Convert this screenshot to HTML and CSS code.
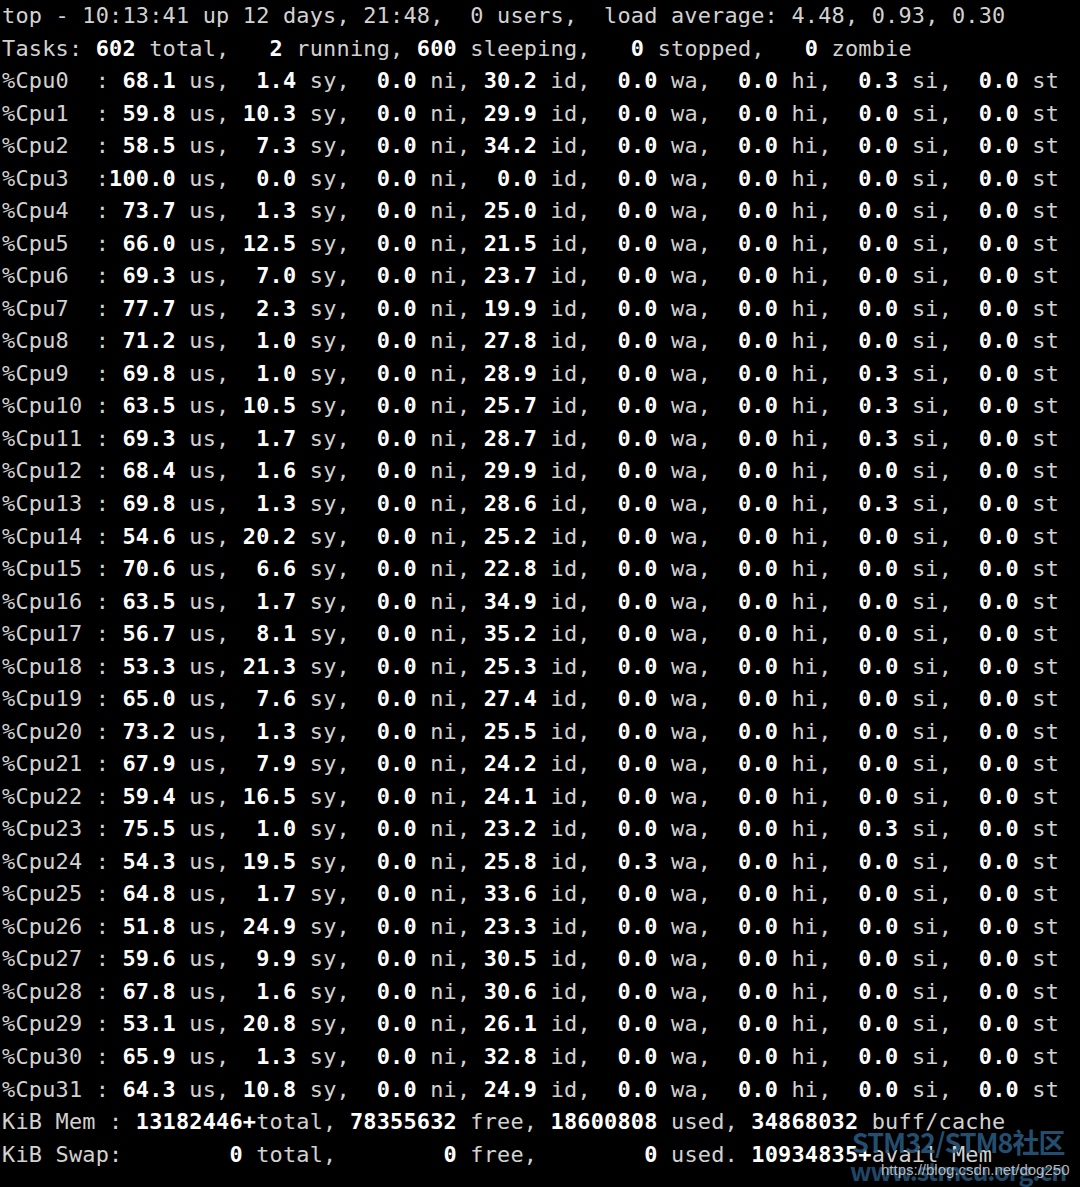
FILE: index.html
```html
<!DOCTYPE html>
<html>
<head>
<meta charset="utf-8">
<link rel="stylesheet" href="styles.css">
</head>
<body>
<div class="term">
<div class="ln">top - 10:13:41 up 12 days, 21:48,  0 users,  load average: 4.48, 0.93, 0.30</div>
<div class="ln">Tasks: <b>602</b> total,   <b>2</b> running, <b>600</b> sleeping,   <b>0</b> stopped,   <b>0</b> zombie</div>
<div class="ln">%Cpu0  : <b>68.1</b> us,  <b>1.4</b> sy,  <b>0.0</b> ni, <b>30.2</b> id,  <b>0.0</b> wa,  <b>0.0</b> hi,  <b>0.3</b> si,  <b>0.0</b> st</div>
<div class="ln">%Cpu1  : <b>59.8</b> us, <b>10.3</b> sy,  <b>0.0</b> ni, <b>29.9</b> id,  <b>0.0</b> wa,  <b>0.0</b> hi,  <b>0.0</b> si,  <b>0.0</b> st</div>
<div class="ln">%Cpu2  : <b>58.5</b> us,  <b>7.3</b> sy,  <b>0.0</b> ni, <b>34.2</b> id,  <b>0.0</b> wa,  <b>0.0</b> hi,  <b>0.0</b> si,  <b>0.0</b> st</div>
<div class="ln">%Cpu3  :<b>100.0</b> us,  <b>0.0</b> sy,  <b>0.0</b> ni,  <b>0.0</b> id,  <b>0.0</b> wa,  <b>0.0</b> hi,  <b>0.0</b> si,  <b>0.0</b> st</div>
<div class="ln">%Cpu4  : <b>73.7</b> us,  <b>1.3</b> sy,  <b>0.0</b> ni, <b>25.0</b> id,  <b>0.0</b> wa,  <b>0.0</b> hi,  <b>0.0</b> si,  <b>0.0</b> st</div>
<div class="ln">%Cpu5  : <b>66.0</b> us, <b>12.5</b> sy,  <b>0.0</b> ni, <b>21.5</b> id,  <b>0.0</b> wa,  <b>0.0</b> hi,  <b>0.0</b> si,  <b>0.0</b> st</div>
<div class="ln">%Cpu6  : <b>69.3</b> us,  <b>7.0</b> sy,  <b>0.0</b> ni, <b>23.7</b> id,  <b>0.0</b> wa,  <b>0.0</b> hi,  <b>0.0</b> si,  <b>0.0</b> st</div>
<div class="ln">%Cpu7  : <b>77.7</b> us,  <b>2.3</b> sy,  <b>0.0</b> ni, <b>19.9</b> id,  <b>0.0</b> wa,  <b>0.0</b> hi,  <b>0.0</b> si,  <b>0.0</b> st</div>
<div class="ln">%Cpu8  : <b>71.2</b> us,  <b>1.0</b> sy,  <b>0.0</b> ni, <b>27.8</b> id,  <b>0.0</b> wa,  <b>0.0</b> hi,  <b>0.0</b> si,  <b>0.0</b> st</div>
<div class="ln">%Cpu9  : <b>69.8</b> us,  <b>1.0</b> sy,  <b>0.0</b> ni, <b>28.9</b> id,  <b>0.0</b> wa,  <b>0.0</b> hi,  <b>0.3</b> si,  <b>0.0</b> st</div>
<div class="ln">%Cpu10 : <b>63.5</b> us, <b>10.5</b> sy,  <b>0.0</b> ni, <b>25.7</b> id,  <b>0.0</b> wa,  <b>0.0</b> hi,  <b>0.3</b> si,  <b>0.0</b> st</div>
<div class="ln">%Cpu11 : <b>69.3</b> us,  <b>1.7</b> sy,  <b>0.0</b> ni, <b>28.7</b> id,  <b>0.0</b> wa,  <b>0.0</b> hi,  <b>0.3</b> si,  <b>0.0</b> st</div>
<div class="ln">%Cpu12 : <b>68.4</b> us,  <b>1.6</b> sy,  <b>0.0</b> ni, <b>29.9</b> id,  <b>0.0</b> wa,  <b>0.0</b> hi,  <b>0.0</b> si,  <b>0.0</b> st</div>
<div class="ln">%Cpu13 : <b>69.8</b> us,  <b>1.3</b> sy,  <b>0.0</b> ni, <b>28.6</b> id,  <b>0.0</b> wa,  <b>0.0</b> hi,  <b>0.3</b> si,  <b>0.0</b> st</div>
<div class="ln">%Cpu14 : <b>54.6</b> us, <b>20.2</b> sy,  <b>0.0</b> ni, <b>25.2</b> id,  <b>0.0</b> wa,  <b>0.0</b> hi,  <b>0.0</b> si,  <b>0.0</b> st</div>
<div class="ln">%Cpu15 : <b>70.6</b> us,  <b>6.6</b> sy,  <b>0.0</b> ni, <b>22.8</b> id,  <b>0.0</b> wa,  <b>0.0</b> hi,  <b>0.0</b> si,  <b>0.0</b> st</div>
<div class="ln">%Cpu16 : <b>63.5</b> us,  <b>1.7</b> sy,  <b>0.0</b> ni, <b>34.9</b> id,  <b>0.0</b> wa,  <b>0.0</b> hi,  <b>0.0</b> si,  <b>0.0</b> st</div>
<div class="ln">%Cpu17 : <b>56.7</b> us,  <b>8.1</b> sy,  <b>0.0</b> ni, <b>35.2</b> id,  <b>0.0</b> wa,  <b>0.0</b> hi,  <b>0.0</b> si,  <b>0.0</b> st</div>
<div class="ln">%Cpu18 : <b>53.3</b> us, <b>21.3</b> sy,  <b>0.0</b> ni, <b>25.3</b> id,  <b>0.0</b> wa,  <b>0.0</b> hi,  <b>0.0</b> si,  <b>0.0</b> st</div>
<div class="ln">%Cpu19 : <b>65.0</b> us,  <b>7.6</b> sy,  <b>0.0</b> ni, <b>27.4</b> id,  <b>0.0</b> wa,  <b>0.0</b> hi,  <b>0.0</b> si,  <b>0.0</b> st</div>
<div class="ln">%Cpu20 : <b>73.2</b> us,  <b>1.3</b> sy,  <b>0.0</b> ni, <b>25.5</b> id,  <b>0.0</b> wa,  <b>0.0</b> hi,  <b>0.0</b> si,  <b>0.0</b> st</div>
<div class="ln">%Cpu21 : <b>67.9</b> us,  <b>7.9</b> sy,  <b>0.0</b> ni, <b>24.2</b> id,  <b>0.0</b> wa,  <b>0.0</b> hi,  <b>0.0</b> si,  <b>0.0</b> st</div>
<div class="ln">%Cpu22 : <b>59.4</b> us, <b>16.5</b> sy,  <b>0.0</b> ni, <b>24.1</b> id,  <b>0.0</b> wa,  <b>0.0</b> hi,  <b>0.0</b> si,  <b>0.0</b> st</div>
<div class="ln">%Cpu23 : <b>75.5</b> us,  <b>1.0</b> sy,  <b>0.0</b> ni, <b>23.2</b> id,  <b>0.0</b> wa,  <b>0.0</b> hi,  <b>0.3</b> si,  <b>0.0</b> st</div>
<div class="ln">%Cpu24 : <b>54.3</b> us, <b>19.5</b> sy,  <b>0.0</b> ni, <b>25.8</b> id,  <b>0.3</b> wa,  <b>0.0</b> hi,  <b>0.0</b> si,  <b>0.0</b> st</div>
<div class="ln">%Cpu25 : <b>64.8</b> us,  <b>1.7</b> sy,  <b>0.0</b> ni, <b>33.6</b> id,  <b>0.0</b> wa,  <b>0.0</b> hi,  <b>0.0</b> si,  <b>0.0</b> st</div>
<div class="ln">%Cpu26 : <b>51.8</b> us, <b>24.9</b> sy,  <b>0.0</b> ni, <b>23.3</b> id,  <b>0.0</b> wa,  <b>0.0</b> hi,  <b>0.0</b> si,  <b>0.0</b> st</div>
<div class="ln">%Cpu27 : <b>59.6</b> us,  <b>9.9</b> sy,  <b>0.0</b> ni, <b>30.5</b> id,  <b>0.0</b> wa,  <b>0.0</b> hi,  <b>0.0</b> si,  <b>0.0</b> st</div>
<div class="ln">%Cpu28 : <b>67.8</b> us,  <b>1.6</b> sy,  <b>0.0</b> ni, <b>30.6</b> id,  <b>0.0</b> wa,  <b>0.0</b> hi,  <b>0.0</b> si,  <b>0.0</b> st</div>
<div class="ln">%Cpu29 : <b>53.1</b> us, <b>20.8</b> sy,  <b>0.0</b> ni, <b>26.1</b> id,  <b>0.0</b> wa,  <b>0.0</b> hi,  <b>0.0</b> si,  <b>0.0</b> st</div>
<div class="ln">%Cpu30 : <b>65.9</b> us,  <b>1.3</b> sy,  <b>0.0</b> ni, <b>32.8</b> id,  <b>0.0</b> wa,  <b>0.0</b> hi,  <b>0.0</b> si,  <b>0.0</b> st</div>
<div class="ln">%Cpu31 : <b>64.3</b> us, <b>10.8</b> sy,  <b>0.0</b> ni, <b>24.9</b> id,  <b>0.0</b> wa,  <b>0.0</b> hi,  <b>0.0</b> si,  <b>0.0</b> st</div>
<div class="ln">KiB Mem : <b>13182446+</b>total, <b>78355632</b> free, <b>18600808</b> used, <b>34868032</b> buff/cache</div>
<div class="ln">KiB Swap:        <b>0</b> total,        <b>0</b> free,        <b>0</b> used. <b>10934835+</b>avail Mem</div>
</div>
<div class="wm">
  <div class="wm-cn">STM32/STM8社区</div>
  <div class="wm-www">www.stmcu.org.cn</div>
  <div class="wm-url">https://blog.csdn.net/dog250</div>
</div>
</body>
</html>
```
FILE: styles.css
```css
html, body {
  margin: 0;
  padding: 0;
  background: #000;
}
body {
  width: 1080px;
  height: 1187px;
  overflow: hidden;
  position: relative;
}
.term {
  padding: 0 0 0 2px;
  font-family: "DejaVu Sans Mono", "Liberation Mono", monospace;
  font-size: 21.9px;
  letter-spacing: 0.2px;
  line-height: 32.54px;
  color: #d2d2d2;
}
.ln {
  white-space: pre;
  height: 32.54px;
}
.term b {
  color: #ffffff;
  font-weight: bold;
}
.wm {
  position: absolute;
  left: 850px;
  top: 1120px;
  width: 230px;
  height: 67px;
}
.wm-cn {
  position: absolute;
  left: 2px;
  top: 8px;
  font-family: "Noto Sans CJK SC", sans-serif;
  font-weight: 700;
  font-size: 27px;
  line-height: 27px;
  letter-spacing: -1px;
  color: rgba(40, 90, 128, 0.88);
  white-space: nowrap;
}
.wm-www {
  position: absolute;
  left: 0;
  top: 38px;
  font-family: "Noto Sans CJK SC", sans-serif;
  font-weight: 700;
  font-size: 25px;
  line-height: 25px;
  letter-spacing: -1px;
  color: rgba(40, 90, 128, 0.8);
  white-space: nowrap;
}
.wm-url {
  position: absolute;
  left: 31px;
  top: 42px;
  font-family: "Liberation Sans", sans-serif;
  font-size: 15px;
  line-height: 16px;
  color: rgba(215, 215, 215, 0.85);
  white-space: nowrap;
}
```
